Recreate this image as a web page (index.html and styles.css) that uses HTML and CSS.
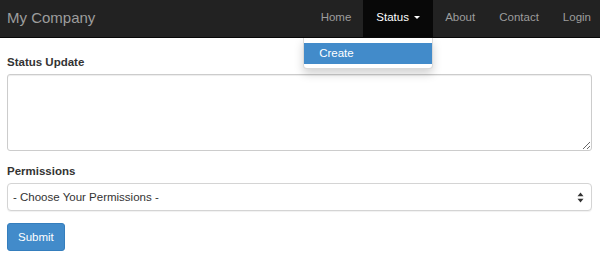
FILE: index.html
```html
<!DOCTYPE html>
<html lang="en">
<head>
<meta charset="utf-8">
<title>My Company</title>
<link rel="stylesheet" href="styles.css">
</head>
<body>
<nav class="navbar">
  <a class="brand" href="#">My Company</a>
  <ul class="nav">
    <li><a href="#">Home</a></li>
    <li class="active dropdown">
      <a href="#">Status <span class="caret"></span></a>
      <ul class="dropdown-menu">
        <li class="selected"><a href="#">Create</a></li>
      </ul>
    </li>
    <li><a href="#">About</a></li>
    <li><a href="#">Contact</a></li>
    <li class="last"><a href="#">Login</a></li>
  </ul>
</nav>
<main class="content">
  <form class="form">
    <div class="form-group">
      <label class="label" for="status">Status Update</label>
      <textarea id="status" class="field textarea"></textarea>
    </div>
    <div class="form-group">
      <label class="label" for="perm">Permissions</label>
      <div class="select-wrap">
        <select id="perm" class="field select">
          <option>- Choose Your Permissions -</option>
        </select>
        <svg class="select-arrows" width="7" height="11" viewBox="0 0 7 11">
          <path d="M3.5 0.5 L6.5 4.3 L0.5 4.3 Z" fill="#333"/>
          <path d="M3.5 10.5 L6.5 6.7 L0.5 6.7 Z" fill="#333"/>
        </svg>
      </div>
    </div>
    <button type="button" class="btn">Submit</button>
  </form>
</main>
</body>
</html>
```

FILE: styles.css
```css
* { box-sizing: border-box; }

html, body {
  margin: 0;
  padding: 0;
  background: #fff;
  color: #333;
  font-family: "Liberation Sans", Helvetica, Arial, sans-serif;
  font-size: 11.5px;
}

a { text-decoration: none; }

.navbar {
  display: flex;
  align-items: stretch;
  height: 38px;
  background: #222;
  border-bottom: 1px solid #080808;
}

.brand {
  padding: 0 0 0 7px;
  font-size: 15px;
  line-height: 35px;
  color: #9d9d9d;
}

.nav {
  list-style: none;
  margin: 0 0 0 auto;
  padding: 0;
  display: flex;
}

.nav > li {
  position: relative;
}

.nav > li > a {
  display: block;
  padding: 0 12px;
  height: 37px;
  line-height: 35px;
  color: #9d9d9d;
}

.nav > li.last > a {
  padding-right: 9px;
}

.nav > li.active > a {
  padding: 0 13px;
  background: #080808;
  color: #fff;
}

.caret {
  display: inline-block;
  width: 0;
  height: 0;
  margin-left: 2px;
  vertical-align: middle;
  border-top: 3px solid #fff;
  border-left: 3px solid transparent;
  border-right: 3px solid transparent;
}

.dropdown-menu {
  position: absolute;
  top: 38px;
  right: 0;
  width: 130px;
  margin: 0;
  padding: 5px 0 4px;
  list-style: none;
  background: #fff;
  border: 1px solid rgba(0, 0, 0, 0.15);
  border-top: 0;
  border-radius: 0 0 4px 4px;
  box-shadow: 0 5px 10px rgba(0, 0, 0, 0.175);
  z-index: 10;
}

.dropdown-menu a {
  display: block;
  padding: 0 15px;
  height: 21px;
  line-height: 21px;
  color: #333;
}

.dropdown-menu .selected a {
  background: #428bca;
  color: #fff;
}

.content {
  padding: 16px 8px 0 7px;
}

.form-group {
  margin-bottom: 12px;
}

.label {
  display: block;
  font-weight: bold;
  line-height: 16px;
  margin-bottom: 4px;
  color: #333;
}

.field {
  display: block;
  width: 100%;
  font-family: inherit;
  font-size: 11.5px;
  color: #555;
  background: #fff;
  border: 1px solid #ccc;
  border-radius: 3px;
}

.textarea {
  height: 77px;
  padding: 5px 10px;
  box-shadow: inset 0 1px 1px rgba(0, 0, 0, 0.075);
  resize: vertical;
}

.select-wrap {
  position: relative;
}

.select {
  -webkit-appearance: none;
  appearance: none;
  height: 28px;
  padding: 0 20px 0 5px;
  color: #333;
  border-color: #d4d4d4;
  border-radius: 4px;
  box-shadow: 0 1px 1px rgba(0, 0, 0, 0.06);
}

.select-arrows {
  position: absolute;
  right: 8px;
  top: 9px;
  pointer-events: none;
}

.btn {
  display: block;
  margin-top: 11px;
  height: 28px;
  padding: 0 10px;
  font-family: inherit;
  font-size: 11.5px;
  color: #fff;
  background: #428bca;
  border: 1px solid #357ebd;
  border-radius: 3px;
}
```
